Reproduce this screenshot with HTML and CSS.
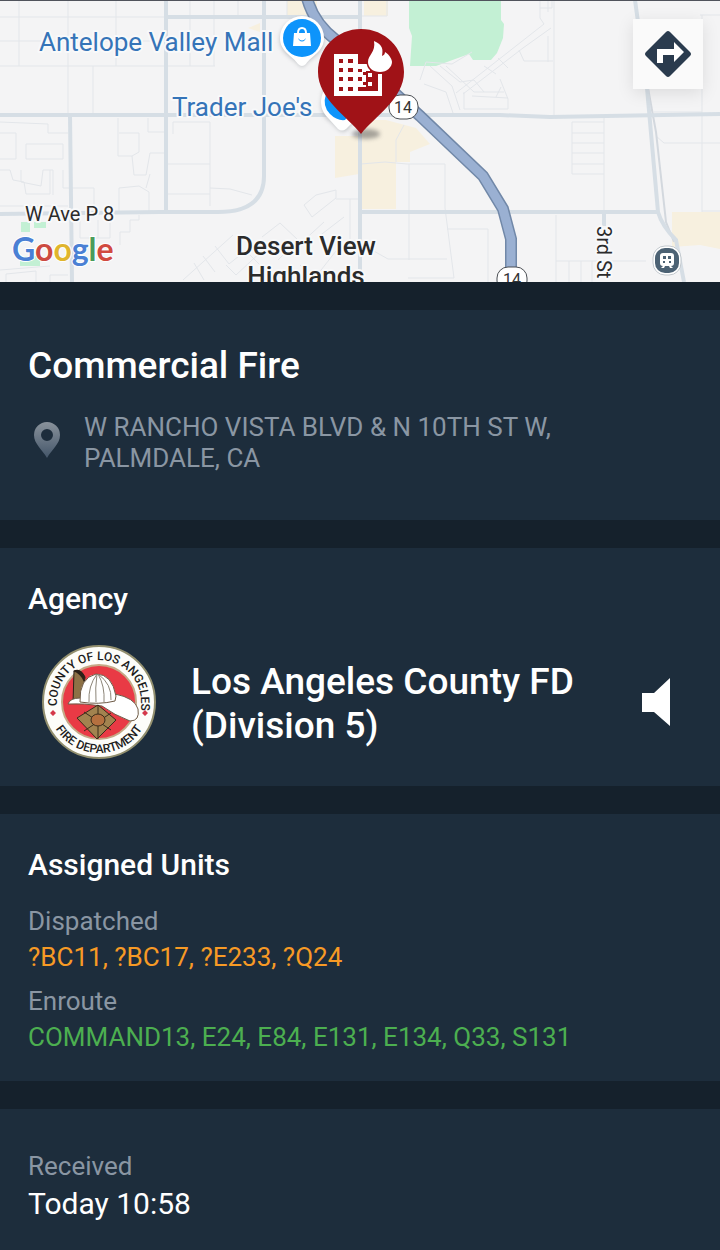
FILE: index.html
```html
<!DOCTYPE html>
<html lang="en">
<head>
    <meta charset="UTF-8">
    <meta name="viewport" content="width=device-width, initial-scale=1.0">
    <title>Commercial Fire</title>
    <link rel="stylesheet" href="styles.css">
</head>
<body>

<div class="map">
    <svg class="map-canvas" viewBox="0 0 720 282" preserveAspectRatio="xMidYMid slice" role="img" aria-label="Incident map">
        <defs>
            <filter id="soft" x="-50%" y="-50%" width="200%" height="200%"><feGaussianBlur stdDeviation="2"/></filter>
        </defs>
        <rect width="720" height="282" fill="#f4f4f5"/>

        <!-- parks and commercial areas -->
        <path class="park" d="M409 0h92v20l3 4-1 14-6 15-6 7-18 0-4-6-33 12h-26l2-30-3-8z"/>
        <path class="park" d="M21 222h9v10h-9zM34 222h12v6H34zM20 256h20v10H20z"/>
        <path class="area" d="M287 0h30v15h-30zM364 0h24v16h-24zM362 120h24l30 8 14 16-20 8v10h-14v47h-34zM335 136h24v38l-24 4zM672 212h48v37l-20-4-28 2zM248 28l12-5v9z"/>

        <!-- small streets -->
        <path class="street" d="M0 17h165M0 41h165M19 0v66M68 0v115M116 0v66M0 66h215M93 66v49M190 0v66M214 0v66M238 0v16M0 122l48 2v9h20M0 133h16v26H0M26 144h37v15H26zM0 170h10l3 10 11 2 2 12h24v-24M21 170v12l20 4 2-16h10v25M63 170v18h31v25M0 206h68M118 118v38h14l7-4v-19h-20M132 156l2 19h12l4-22h14M148 118v14h18M119 212v-24l20-2 10 6v20M146 188l4-14M173 134v-12h37v84M168 164h42M168 194h42M210 188l20 1 22 6"/>
        <path class="street" d="M80 213v25h18v-18M98 238h12v-16M120 245v-13h10v-12h9v-5M0 270l50-4M6 282v-8l30-3v11M50 282v-7h18M183 280l50-45M194 263l10 17M203 256l12 16M215 246l14 18 30-24M226 265l10 10 28-26M262 237l18-14 18 17-20 20M248 253l22 22M300 265l14 14 22-28M287 0v16h100V0M310 0v16"/>
        <path class="street" d="M304 205l12-10 20-5v8l-24 19zM336 199h24M350 199v40M324 222l-24 22M344 217l-26 20M361 164l24-2 22 2h38M396 162v-22l8-15M409 164v96M445 164v44M372 250l16 9h59M445 208l9 70h-46M447 229h41v53M420 80l6-18 26 2 20-12M430 66l22 20 8 24M440 66l20 16 14-2 10 12M424 84l22 8 8 24M446 66l28 26h30"/>
        <path class="street" d="M540 0v18l4 6-88 69M551 28l-28 20-60 46M548 0v12M540 8h12V0M554 0v115M519 50l5 11h29M498 58l10 10M548 36v26M484 66l12 8M464 92v17h44V99l-8-20M472 96l36 2M496 97l5-10M572 122h32M572 133h32M572 143h32M572 153h32M572 164h32M572 174h32M572 122v52M604 115v97M556 215v67M556 261h90M569 261v21M581 261v21M592 261v21M702 15v197M700 15h20M654 112h48M702 211h18M656 136l8 7h56"/>
        <path class="rail" d="M648 88l8 44 10 90 8 20"/>

        <!-- main roads -->
        <path class="road" d="M0 115h500l50 2 170-3M70 115l2 167M166 0v214M166 17h196M264 0v176q0 36-46 36H160l-160 2M360 0v282M361 212h297M604 212v14"/>
        <path class="road" d="M635 0l12 88 11 124q4 14 18 28l8 42"/>

        <!-- state route 14 -->
        <path class="freeway-edge" d="M306-6q6 28 30 46l84 76 63 60 20 33 8 30v40"/>
        <path class="freeway" d="M306-6q6 28 30 46l84 76 63 60 20 33 8 30v40"/>

        <g class="shield">
            <rect x="389" y="95" width="29" height="24" rx="11"/>
            <text x="403" y="113">14</text>
            <rect x="497" y="267" width="30" height="25" rx="11"/>
            <text x="512" y="285">14</text>
        </g>

        <!-- labels -->
        <text class="label poi" x="39" y="51">Antelope Valley Mall</text>
        <text class="label poi" x="172" y="116">Trader Joe's</text>
        <text class="label small" x="25" y="221">W Ave P 8</text>
        <text class="label small" transform="translate(597 226) rotate(90)">3rd St</text>
        <text class="label place" x="306" y="255">Desert View</text>
        <text class="label place" x="306" y="285">Highlands</text>
        <text class="google" x="12" y="261"><tspan fill="#4a80d4">G</tspan><tspan fill="#cc4a41">o</tspan><tspan fill="#e0b52d">o</tspan><tspan fill="#4a80d4">g</tspan><tspan fill="#4a9c5a">l</tspan><tspan fill="#d14a40">e</tspan></text>

        <!-- train station -->
        <rect x="653" y="246" width="28" height="29" rx="12" fill="#fff" stroke="#c3c9ce"/>
        <rect x="655" y="248" width="24" height="25" rx="10" fill="#4c6274"/>
        <path fill="#fff" fill-rule="evenodd" d="M663 253h8q3 0 3 3v7q0 3-3 3l2 2h-3l-1-2h-4l-1 2h-3l2-2q-3 0-3-3v-7q0-3 3-3zM663 256v3h3v-3zM668 256v3h3v-3zM663 261v2h2v-2zM669 261v2h2v-2z"/>

        <!-- mall marker -->
        <path fill="#8a8f94" opacity=".5" filter="url(#soft)" d="M302 18a22 22 0 0 1 22 22c0 14-14 18-19 25q-3 4-6 0c-5-7-19-11-19-25a22 22 0 0 1 22-22z"/>
        <path fill="#fff" d="M302 16a22 22 0 0 1 22 22c0 14-13 18-18 26q-4 4-8 0c-5-8-18-12-18-26a22 22 0 0 1 22-22z"/>
        <circle cx="302" cy="38" r="19" fill="#0d94fb"/>
        <path fill="#fff" fill-rule="evenodd" d="M294 33h3q0-6 5-6t5 6h3l1 13h-18zM299 33h6q0-4-3-4t-3 4zM298 38q4 5 8 0l-1 2q-3 3-6 0z"/>

        <!-- store marker, mostly behind the incident pin -->
        <path fill="#8a8f94" opacity=".5" filter="url(#soft)" d="M321 104q0 12 10 18l8 8q4 3 8 0l8-10V90h-32z"/>
        <path fill="#fff" d="M323 92q-6 16 6 27l9 10q4 3 8 0l12-12V88z"/>
        <path fill="#0d94fb" d="M326 94q-4 12 4 20 7 7 15 6l8-10-20-20z"/>

        <!-- incident pin -->
        <ellipse cx="366" cy="134" rx="14" ry="5" fill="#555" opacity=".5" filter="url(#soft)"/>
        <path fill="#a01217" d="M361 29c24 0 43 19 43 43 0 27-30 45-43 62-13-17-43-35-43-62 0-24 19-43 43-43z"/>
        <path fill="#fff" d="M334 54h24v10h12v7h-4v20h12V74h4v22h-48z"/>
        <path fill="#a01217" d="M339 59h4v4h-4zM348 59h5v4h-5zM339 68h4v4h-4zM348 68h5v4h-5zM339 77h4v4h-4zM348 77h5v4h-5zM339 87h4v4h-4zM348 87h5v4h-5zM358 69h4v3h-4zM358 77h4v4h-4zM358 87h8v4h-8zM363 72h5v3h-5zM363 82h5v3h-5z"/>
        <path fill="#fff" d="M368 73h4v4h-4zM368 82h4v4h-4z"/>
        <path fill="#fff" stroke="#a01217" stroke-width="3" paint-order="stroke" d="M374 41c9 4 9 8 8 15 2-1 3-2 3-4 5 3 7 8 7 10 0 5-5 10-12 10s-12-4-12-10c0-7 8-10 6-21z"/>
    </svg>
    <button class="directions" type="button" aria-label="Directions">
        <svg viewBox="0 0 48 48" width="48" height="48">
            <path fill="#2a3b4e" d="M22 2q2-2 4 0l20 20q2 2 0 4L26 46q-2 2-4 0L2 26q-2-2 0-4z"/>
            <path fill="#fff" d="M13 33V19h17v-7l10 10-10 10v-7H19v8z"/>
        </svg>
    </button>
</div>

<main class="details">
    <section class="card incident">
        <h1>Commercial Fire</h1>
        <div class="address">
            <svg class="place-icon" viewBox="0 0 26 36" width="26" height="36">
                <defs>
                    <linearGradient id="fade" x1="0" y1="0" x2="0" y2="1">
                        <stop offset="0" stop-color="#89929b"/>
                        <stop offset="1" stop-color="#44566a"/>
                    </linearGradient>
                </defs>
                <path fill="url(#fade)" fill-rule="evenodd" d="M13 0a13 13 0 0 1 13 13c0 9-8 14-13 23C8 27 0 22 0 13A13 13 0 0 1 13 0zM13 7a6 6 0 1 0 0 12 6 6 0 0 0 0-12z"/>
            </svg>
            <p>W RANCHO VISTA BLVD &amp; N 10TH ST W,<br>PALMDALE, CA</p>
        </div>
    </section>

    <section class="card agency">
        <h2>Agency</h2>
        <div class="agency-row">
            <svg class="seal" viewBox="0 0 116 116" width="116" height="116" role="img" aria-label="County of Los Angeles Fire Department">
                <defs>
                    <path id="arc-top" d="M16 62v-4a42 42 0 0 1 84 0v8"/>
                    <path id="arc-bottom" d="M7 58a51 51 0 0 0 102 0"/>
                </defs>
                <circle cx="58" cy="58" r="56" fill="#fdfdf9" stroke="#93906f" stroke-width="2"/>
                <circle cx="58" cy="58" r="37" fill="#e93a45" stroke="#c5a987" stroke-width="2"/>
                <text class="seal-text"><textPath href="#arc-top" startOffset="0">COUNTY OF LOS ANGELES</textPath></text>
                <text class="seal-text" text-anchor="middle"><textPath href="#arc-bottom" startOffset="50%">FIRE DEPARTMENT</textPath></text>
                <path fill="#d4394a" d="M12 66l3 3-3 3-3-3zM104 66l3 3-3 3-3-3z"/>
                <!-- helmet -->
                <path fill="#8d7145" stroke="#2b2118" d="M33 27q7-2 11 6l-3 26-9 0z"/>
                <path fill="#2b2118" d="M32 27q8-4 12 6l-1 5q-3-8-11-11z"/>
                <path fill="#fff" stroke="#6f5c48" d="M27 60q2-6 12-6l35-4q20 4 23 15 2 12-8 12-16-6-28-15-18-3-34-2z"/>
                <path fill="#fff" stroke="#6f5c48" d="M39 58q-1-24 16-28 16 0 20 22l-1 5q-16 4-35 1z"/>
                <path fill="none" stroke="#8c8578" d="M56 30q-9 12-8 28M56 30q-2 14-1 28M57 30q7 12 6 28M57 30q14 10 13 26"/>
                <path fill="#a2834f" stroke="#3a2c1b" d="M57 61l18 15-19 19-20-21z"/>
                <path stroke="#3a2c1b" fill="none" d="M43 68l27 18M70 69L43 87M57 61v34"/>
                <ellipse cx="57" cy="76" rx="7" ry="6" fill="#b5703f" stroke="#3a2c1b"/>
            </svg>
            <p class="agency-name">Los Angeles County FD<br>(Division 5)</p>
            <button class="listen" type="button" aria-label="Listen">
                <svg viewBox="0 0 28 48" width="28" height="48"><path fill="#fff" d="M0 15h12L28 0v48L12 34H0z"/></svg>
            </button>
        </div>
    </section>

    <section class="card units">
        <h2>Assigned Units</h2>
        <dl>
            <dt>Dispatched</dt>
            <dd class="dispatched">?BC11, ?BC17, ?E233, ?Q24</dd>
            <dt>Enroute</dt>
            <dd class="enroute">COMMAND13, E24, E84, E131, E134, Q33, S131</dd>
        </dl>
    </section>

    <section class="card received">
        <dl>
            <dt>Received</dt>
            <dd class="time">Today 10:58</dd>
        </dl>
    </section>
</main>

</body>
</html>
```
FILE: styles.css
```css
* {
    box-sizing: border-box;
}

body {
    margin: 0;
    background: #15212c;
    color: #fff;
    font-family: Roboto, 'Liberation Sans', sans-serif;
}

h1, h2, p, dl, dd {
    margin: 0;
}

button {
    border: none;
    padding: 0;
    cursor: pointer;
}

svg {
    display: block;
}

/* Map */
.map {
    position: relative;
    height: 282px;
    border-top: 1px solid #50535c;
    overflow: hidden;
}

.map-canvas {
    width: 100%;
    height: 282px;
    margin-top: -1px;
}

.park {
    fill: #c3f0d4;
}

.area {
    fill: #f7f0df;
}

.street {
    fill: none;
    stroke: #e3e6ea;
    stroke-width: 1;
}

.rail {
    fill: none;
    stroke: #d3d8de;
    stroke-width: 2;
}

.road {
    fill: none;
    stroke: #d6dee5;
    stroke-width: 4;
}

.freeway-edge {
    fill: none;
    stroke: #7188a8;
    stroke-width: 12;
}

.freeway {
    fill: none;
    stroke: #9ab0d2;
    stroke-width: 9;
}

.shield rect {
    fill: #fff;
    stroke: #4b4f54;
    stroke-width: 1;
}

.shield text {
    font-size: 16px;
    fill: #333;
    text-anchor: middle;
}

.label {
    paint-order: stroke;
    stroke: #f8f9fa;
    stroke-width: 4px;
    stroke-linejoin: round;
    fill: #2b2b2b;
}

.poi {
    font-size: 26px;
    fill: #3574b8;
}

.small {
    font-size: 20px;
}

.place {
    font-size: 26px;
    font-weight: 500;
    text-anchor: middle;
}

.google {
    font-family: Lato, sans-serif;
    font-size: 32px;
    font-weight: 700;
    paint-order: stroke;
    stroke: #fff;
    stroke-width: 2px;
}

.directions {
    position: absolute;
    top: 18px;
    right: 17px;
    width: 70px;
    height: 70px;
    display: flex;
    align-items: center;
    justify-content: center;
    background: #fafafa;
    box-shadow: 0 4px 16px rgba(0, 0, 0, 0.1);
}

/* Cards */
.details {
    display: flex;
    flex-direction: column;
    gap: 28px;
    padding-top: 28px;
}

.card {
    background: #1d2d3c;
    padding: 34px 28px 26px;
}

h1 {
    font-size: 37px;
    line-height: 44px;
    font-weight: 500;
}

h2 {
    font-size: 30px;
    line-height: 34px;
    font-weight: 500;
}

.incident {
    padding-bottom: 46px;
}

.address {
    display: flex;
    align-items: flex-start;
    gap: 24px;
    margin-top: 24px;
    padding-left: 6px;
    font-size: 26px;
    line-height: 31px;
    color: #8a96a3;
}

.place-icon {
    flex-shrink: 0;
    margin-top: 10px;
}

.agency-row {
    display: flex;
    align-items: center;
    margin-top: 28px;
    padding: 0 22px 0 13px;
}

.seal {
    flex-shrink: 0;
}

.seal-text {
    font-size: 12px;
    font-weight: 500;
    fill: #1d1d1d;
}

.agency-name {
    flex: 1;
    margin-left: 34px;
    padding-top: 4px;
    font-size: 37px;
    line-height: 44px;
    font-weight: 500;
}

.listen {
    background: none;
}

.units dl {
    margin-top: 21px;
}

dt, dd {
    font-size: 26px;
    line-height: 36px;
}

dt {
    color: #8a96a3;
}

dd + dt {
    margin-top: 8px;
}

.dispatched {
    color: #f79a25;
}

.enroute {
    color: #4caf50;
}

.received {
    padding-top: 39px;
}

.time {
    font-size: 30px;
    line-height: 40px;
}
```
